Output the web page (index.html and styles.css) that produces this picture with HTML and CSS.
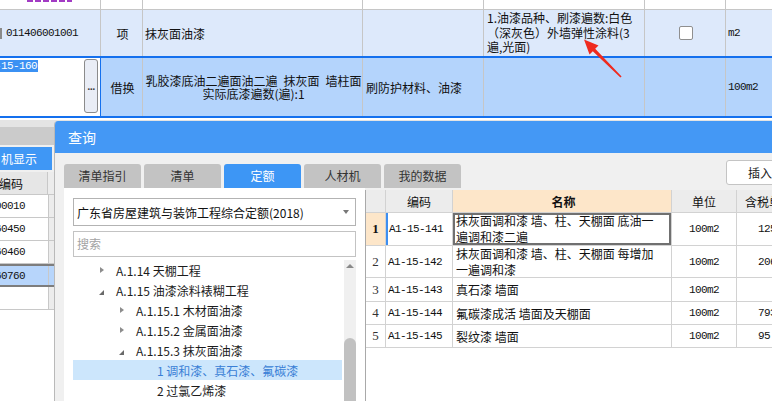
FILE: index.html
```html
<!DOCTYPE html>
<html lang="zh">
<head>
<meta charset="utf-8">
<title>查询</title>
<link rel="stylesheet" href="styles.css">
</head>
<body>
<div class="screen">
  <div class="grid">
    <div class="row row0">
      <div class="c c0"><span class="dash"></span></div>
      <div class="c c1 center"><span class="cut">土</span></div>
      <div class="c c2"><span class="cut">找平层砂浆</span></div>
      <div class="c c3"></div>
      <div class="c c4"></div>
      <div class="c c5"></div>
      <div class="c c6"><span class="cut mono">m2</span></div>
    </div>
    <div class="row row1">
      <div class="c c0 mono"><span class="mark"></span>011406001001</div>
      <div class="c c1 center">项</div>
      <div class="c c2">抹灰面油漆</div>
      <div class="c c3"></div>
      <div class="c c4 desc">1.油漆品种、刷漆遍数:白色<br>（深灰色）外墙弹性涂料(3<br>遍,光面)</div>
      <div class="c c5 center"><span class="checkbox"></span></div>
      <div class="c c6 mono">m2</div>
    </div>
    <div class="row row2">
      <div class="c c0 edit"><span class="sel mono">-15-160</span><span class="more">...</span></div>
      <div class="c c1 center">借换</div>
      <div class="c c2 center wrap">乳胶漆底油二遍面油二遍&ensp;抹灰面&ensp;墙柱面<br>实际底漆遍数(遍):1</div>
      <div class="c c3">刷防护材料、油漆</div>
      <div class="c c4"></div>
      <div class="c c5"></div>
      <div class="c c6 mono">100m2</div>
    </div>
  </div>

  <div class="side">
    <div class="side-top"></div>
    <div class="side-tabs"><div class="side-tab">机显示</div></div>
    <div class="srow shead"><div class="sc">编码</div><div class="sc2"></div></div>
    <div class="srow"><div class="sc mono"><span class="scode">011406000010</span></div><div class="sc2"></div></div>
    <div class="srow"><div class="sc mono"><span class="scode">011406060450</span></div><div class="sc2"></div></div>
    <div class="srow"><div class="sc mono"><span class="scode">011406060460</span></div><div class="sc2"></div></div>
    <div class="srow ssel"><div class="sc mono"><span class="scode">011406060760</span></div><div class="sc2"></div></div>
    <div class="srow"><div class="sc"></div><div class="sc2"></div></div>
  </div>

  <div class="dialog">
    <div class="dlg-title">查询</div>
    <div class="dlg-toolbar">
      <div class="tabs">
        <div class="tab">清单指引</div>
        <div class="tab">清单</div>
        <div class="tab active">定额</div>
        <div class="tab">人材机</div>
        <div class="tab">我的数据</div>
      </div>
      <div class="btn">插入</div>
    </div>
    <div class="dlg-body">
      <div class="pane">
        <div class="select"><span>广东省房屋建筑与装饰工程综合定额(2018)</span><span class="caret"></span></div>
        <div class="search">搜索</div>
        <div class="tree-wrap">
          <div class="tree">
            <div class="node l1"><span class="tri"><i class="closed"></i></span>A.1.14 天棚工程</div>
            <div class="node l1"><span class="tri"><i class="open"></i></span>A.1.15 油漆涂料裱糊工程</div>
            <div class="node l2"><span class="tri"><i class="closed"></i></span>A.1.15.1 木材面油漆</div>
            <div class="node l2"><span class="tri"><i class="closed"></i></span>A.1.15.2 金属面油漆</div>
            <div class="node l2"><span class="tri"><i class="open"></i></span>A.1.15.3 抹灰面油漆</div>
            <div class="node l3 selected">1 调和漆、真石漆、氟碳漆</div>
            <div class="node l3">2 过氯乙烯漆</div>
          </div>
          <div class="scrollbar"><span class="up"></span><span class="thumb"></span></div>
        </div>
      </div>
      <div class="table">
        <div class="tr th">
          <div class="td n"></div>
          <div class="td code center">编码</div>
          <div class="td name hl center"><b>名称</b></div>
          <div class="td unit center">单位</div>
          <div class="td price">含税单价</div>
        </div>
        <div class="tr h33">
          <div class="td n cur">1</div>
          <div class="td code mono curcode">A1-15-141</div>
          <div class="td name wrap curcell">抹灰面调和漆 墙、柱、天棚面 底油一<br>遍调和漆二遍</div>
          <div class="td unit center mono">100m2</div>
          <div class="td price mono">1259.63</div>
        </div>
        <div class="tr h32">
          <div class="td n">2</div>
          <div class="td code mono">A1-15-142</div>
          <div class="td name wrap">抹灰面调和漆 墙、柱、天棚面 每增加<br>一遍调和漆</div>
          <div class="td unit center mono">100m2</div>
          <div class="td price mono">206.75</div>
        </div>
        <div class="tr h24">
          <div class="td n">3</div>
          <div class="td code mono">A1-15-143</div>
          <div class="td name">真石漆 墙面</div>
          <div class="td unit center mono">100m2</div>
          <div class="td price mono"></div>
        </div>
        <div class="tr h23">
          <div class="td n">4</div>
          <div class="td code mono">A1-15-144</div>
          <div class="td name">氟碳漆成活 墙面及天棚面</div>
          <div class="td unit center mono">100m2</div>
          <div class="td price mono">7931.07</div>
        </div>
        <div class="tr h23">
          <div class="td n">5</div>
          <div class="td code mono">A1-15-145</div>
          <div class="td name">裂纹漆 墙面</div>
          <div class="td unit center mono">100m2</div>
          <div class="td price mono">95 .21</div>
        </div>
      </div>
    </div>
  </div>

  <svg class="arrow" width="772" height="401" viewBox="0 0 772 401">
    <polygon points="584,39.5 598.5,45.5 595.2,48.8 621.6,76.4 620.4,77.6 592.8,51.2 589.5,54.5" fill="#ef2a1f"/>
  </svg>
</div>
</body>
</html>
```

FILE: styles.css
```css
* { box-sizing: border-box; }
html, body { margin: 0; padding: 0; }
body {
  width: 772px;
  height: 401px;
  overflow: hidden;
  background: #fff;
  font-family: "Noto Sans CJK SC", "Noto Sans", sans-serif;
  font-size: 12px;
  color: #111;
}
.screen { position: relative; width: 772px; height: 401px; overflow: hidden; }
.mono { font-family: "Liberation Mono", monospace; font-size: 11px; letter-spacing: -0.6px; }
.center { justify-content: center; text-align: center; }

/* top grid */
.row { display: grid; grid-template-columns: 101px 42px 220px 121px 161px 81px 80px; }
.c {
  border-right: 1px solid #c6c6c6;
  display: flex;
  align-items: center;
  overflow: hidden;
  white-space: nowrap;
  padding-left: 2px;
}
.row0 { height: 10px; border-bottom: 1px solid #c6c6c6; }
.row0 .c { align-items: flex-start; }
.cut { display: block; color: #a23bc4; line-height: 12px; margin-top: -13px; }
.dash {
  display: block;
  width: 45px;
  height: 2px;
  margin-left: 25px;
  background: repeating-linear-gradient(90deg, #a23bc4 0 6px, transparent 6px 8px);
}
.row1 { height: 46px; background: #dde9fb; }
.row1 .c0 { padding-left: 0; }
.mark { display: inline-block; width: 2px; height: 11px; background: #8a8a8a; margin-right: 4px; }
.desc { align-items: flex-start; line-height: 14.5px; padding: 1px 0 0 3px; white-space: nowrap; }
.checkbox {
  display: block;
  width: 14px;
  height: 14px;
  background: #fff;
  border: 1px solid #8f8f8f;
  border-radius: 2px;
  margin-top: -1px;
}
.row2 {
  height: 62px;
  background: #b4d4fc;
  border-top: 2px solid #1470ee;
  border-bottom: 2px solid #1470ee;
}
.row2 .edit {
  background: #fff;
  border-right: 1px solid #1470ee;
  align-items: flex-start;
  padding-left: 0;
}
.sel {
  background: #3b91f3;
  color: #fff;
  line-height: 12px;
  margin: 2px 0 0 -5px;
  padding-right: 1px;
}
.more {
  margin: 1px 2px 0 auto;
  width: 14px;
  height: 54px;
  border: 1px solid #8b8b8b;
  border-radius: 3px;
  background: #e9edf6;
  display: flex;
  align-items: center;
  justify-content: center;
  font-family: "Liberation Sans", sans-serif;
  font-size: 11px;
  font-weight: bold;
  letter-spacing: -0.5px;
  color: #444;
}
.wrap { white-space: nowrap; line-height: 13px; }
.row2 .c3 { padding-left: 3px; }
.row2 .c6, .row1 .c6 { padding-left: 2px; }

/* left background panel */
.side { margin-top: 2px; width: 100%; }
.side-top { height: 25px; background: linear-gradient(#e4e4e4 0 7px, #cbcbcb 7px); }
.side-tabs { height: 27px; background: #f0f0f0; padding-top: 2px; }
.side-tab {
  width: 52px;
  height: 23px;
  background: #3f97f5;
  color: #fff;
  line-height: 23px;
  padding-left: 1px;
  white-space: nowrap;
  overflow: hidden;
}
.srow { display: flex; height: 23px; border-bottom: 1px solid #c8c8c8; }
.sc { width: 49px; border-right: 1px solid #c8c8c8; display: flex; align-items: center; overflow: hidden; white-space: nowrap; }
.sc2 { flex: 1; background: #ececec; }
.shead { background: #e6e6e6; }
.shead .sc { padding-left: 0; margin-left: -1px; }
.scode { margin-left: -47px; }
.ssel { background: #b7d5fb; border-top: 2px solid #7d7d7d; border-bottom: 2px solid #7d7d7d; height: 23px; }
.ssel .sc2 { background: #b7d5fb; }

/* dialog */
.dialog {
  position: absolute;
  left: 54px;
  top: 121px;
  width: 762px;
  height: 280px;
  background: #f0f0f0;
  border-left: 1px solid #b9b9b9;
  border-radius: 4px 0 0 0;
  overflow: hidden;
}
.dlg-title {
  height: 32px;
  background: #4498f5;
  color: #fff;
  font-size: 14px;
  line-height: 32px;
  padding-left: 13px;
}
.dlg-toolbar { height: 35px; display: flex; padding-left: 9px; }
.tabs { display: flex; align-self: flex-end; }
.tab {
  width: 77px;
  height: 24px;
  margin-right: 3px;
  background: #c3c3c3;
  color: #333;
  border-radius: 3px 3px 0 0;
  text-align: center;
  line-height: 24px;
}
.tab.active { background: #3d96f5; color: #fff; }
.btn {
  margin: 7px 10px 0 auto;
  width: 80px;
  height: 25px;
  background: #fff;
  border: 1px solid #c4c4c4;
  border-radius: 3px;
  line-height: 23px;
  padding-left: 21px;
  color: #222;
}
.dlg-body { display: flex; height: 213px; padding-left: 9px; }
.pane { width: 301px; background: #fff; padding: 10px 9px 0; }
.select {
  height: 28px;
  border: 1px solid #b3b3b3;
  display: flex;
  align-items: center;
  justify-content: space-between;
  padding: 0 6px 0 3px;
  white-space: nowrap;
}
.caret {
  width: 0;
  height: 0;
  border-left: 3.5px solid transparent;
  border-right: 3.5px solid transparent;
  border-top: 4px solid #777;
}
.search {
  margin-top: 5px;
  height: 26px;
  border: 1px solid #c3c3c3;
  color: #a3a3a3;
  line-height: 24px;
  padding-left: 3px;
}
.tree-wrap { display: flex; margin-top: 3px; height: 141px; }
.tree { width: 271px; }
.node { height: 20px; display: flex; align-items: center; white-space: nowrap; color: #1c1c1c; }
.node.l1 { padding-left: 27px; }
.node.l2 { padding-left: 47px; }
.node.l3 { padding-left: 84px; }
.node.selected { background: #cce6fc; color: #3a7fd6; }
.tri { width: 16px; height: 20px; display: flex; align-items: center; }
.tri .closed {
  width: 0; height: 0;
  border-left: 4px solid #8d8d8d;
  border-top: 3.5px solid transparent;
  border-bottom: 3.5px solid transparent;
}
.tri .open {
  width: 0; height: 0;
  margin-top: 4px;
  margin-left: -1px;
  border-bottom: 5px solid #6a6a6a;
  border-left: 5px solid transparent;
}
.scrollbar {
  margin-left: 2px;
  width: 12px;
  background: #f0f0f0;
  display: flex;
  flex-direction: column;
  align-items: center;
}
.up {
  margin-top: 4px;
  width: 0; height: 0;
  border-left: 4px solid transparent;
  border-right: 4px solid transparent;
  border-bottom: 4px solid #8a8a8a;
}
.thumb {
  margin-top: 70px;
  width: 12px;
  flex: 1;
  background: #c1c1c1;
  border-radius: 6px 6px 0 0;
}

/* result table */
.table {
  width: 452px;
  margin-top: 2px;
  background: #fff;
  border-left: 1px solid #a9a9a9;
}
.tr { display: grid; grid-template-columns: 20px 67px 219px 65px 80px; border-bottom: 1px solid #d2d2d2; }
.td {
  border-right: 1px solid #d2d2d2;
  display: flex;
  align-items: center;
  overflow: hidden;
  white-space: nowrap;
}
.th { height: 23px; background: #ececec; }
.th .td { color: #111; }
.th .hl { background: #fde6c9; }
.h33 { height: 33px; }
.h32 { height: 32px; }
.h24 { height: 24px; }
.h23 { height: 23px; }
.td.n { justify-content: center; font-family: "Liberation Serif", serif; font-size: 13px; color: #333; }
.td.n.cur { background: #fde6c9; font-weight: bold; color: #111; }
.td.code { padding-left: 2px; }
.th .td.code { padding-left: 0; }
.curcode { border-left: 2px solid #3d8ef0; padding-left: 1px !important; }
.td.name { padding-left: 3px; }
.td.name.wrap { line-height: 16px; }
.curcell { box-shadow: inset 0 0 0 2px #707070; }
.td.price { padding-left: 21px; }
.th .td.price { padding-left: 8px; }

.arrow { position: absolute; left: 0; top: 0; pointer-events: none; }
```
